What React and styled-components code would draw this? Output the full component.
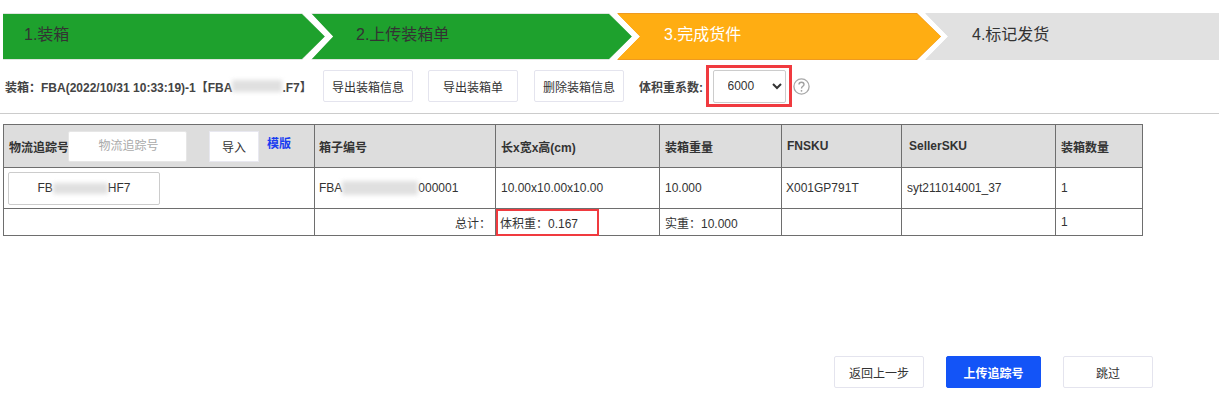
import React from "react";
import styled, { createGlobalStyle } from "styled-components";

const Global = createGlobalStyle`
  html, body { margin: 0; padding: 0; background: #fff; }
  body { font-family: "Liberation Sans", "Noto Sans CJK SC", sans-serif; font-size: 12px; color: #333; }
`;
const Page = styled.div`
  width: 1219px; height: 410px; overflow: hidden; padding-top: 13px; box-sizing: border-box;
`;
const Steps = styled.div`
  display: flex; height: 47px; padding-left: 3px;
`;
const Step = styled.div`
  position: relative; flex: none; box-sizing: border-box; height: 47px;
  width: ${p => p.$w}px; margin-left: ${p => p.$ml}px;
  padding-left: ${p => p.$pl}px;
  background: ${p => p.$edge};
  clip-path: ${p => p.$shape};
  font-size: 16px; line-height: 43px; color: ${p => p.$color};
  &::before {
    content: ""; position: absolute; inset: 1px 0 1px 0; background: ${p => p.$bg}; clip-path: ${p => p.$shape};
  }
  & > span { position: relative; }
`;
const Toolbar = styled.div`
  display: flex; align-items: center; height: 54px; box-sizing: border-box;
  border-bottom: 1px solid #ccc; padding: 0 0 1px 5px; font-size: 12px;
`;
const Info = styled.div`
  font-weight: bold; color: #444; width: 318px; flex: none; white-space: nowrap; display: flex; align-items: center;
`;
const Smear = styled.span`
  display: inline-block; width: ${p => p.$w}px; height: ${p => p.$h || 12}px; background: #e0e0e0; filter: blur(2px);
`;
const Btn = styled.button`
  flex: none; box-sizing: border-box; width: ${p => p.$w}px; height: ${p => p.$h || 32}px; margin-right: ${p => p.$mr || 0}px;
  background: ${p => p.$primary ? "#1354f7" : "#fff"};
  color: ${p => p.$primary ? "#fff" : "#333"};
  border: 1px solid ${p => p.$primary ? "#1354f7" : "#e4e4ee"};
  border-radius: 2px; padding: 0; font: ${p => p.$primary ? "bold" : "normal"} 12px "Liberation Sans", "Noto Sans CJK SC", sans-serif;
`;
const CoefLabel = styled.span`
  margin-left: 15px; width: 67px; flex: none; color: #444; font-weight: bold; white-space: nowrap;
`;
const RedBox = styled.div`
  box-sizing: border-box; width: 86px; height: 42px; flex: none; border: 3px solid #f03a3f;
  display: flex; align-items: center; justify-content: center;
`;
const Select = styled.select`
  width: 73px; height: 33px; box-sizing: border-box; border: 1px solid #ccc; border-radius: 2px; background: #fff;
  padding-left: 10px; font: 12px "Liberation Sans", sans-serif; color: #333;
`;
const Help = styled.svg`
  width: 17px; height: 17px; margin-left: 1px; flex: none;
`;
const TableWrap = styled.div`
  padding: 10px 0 0 3px;
`;
const Table = styled.table`
  border-collapse: collapse; table-layout: fixed; width: 1139px;
  th, td { border: 1px solid #6e6e6e; padding: 0 5px; font-size: 12px; text-align: left; box-sizing: border-box; }
  th { background: #ddd; height: 43px; color: #333; font-weight: bold; }
  td { background: #fff; color: #333; }
  th:nth-child(2), td:nth-child(1), td:nth-child(2), td:nth-child(5) { padding-left: 4px; }
  th:nth-child(6) { padding-left: 7px; }
`;
const BodyRow = styled.tr` height: 41px; `;
const TotalRow = styled.tr` height: 27px; `;
const HeadTools = styled.div`
  display: flex; align-items: center; white-space: nowrap;
`;
const TrackInput = styled.input`
  box-sizing: border-box; width: 119px; height: 31px; margin-left: -1px; border: 1px solid #e6e6e6; border-radius: 2px; background: #fff;
  text-align: center; font: 12px "Liberation Sans", "Noto Sans CJK SC", sans-serif; padding: 0 0 0 2px;
  &::placeholder { color: #aaa; }
`;
const ImportBtn = styled.button`
  box-sizing: border-box; width: 50px; height: 31px; margin-left: 22px; border: 1px solid #e8e8f0; background: #fff; padding: 0;
  font: 12px "Liberation Sans", "Noto Sans CJK SC", sans-serif; color: #333;
`;
const TemplateLink = styled.a`
  margin: 0 0 8px 8px; color: #1a3df0; font-weight: bold;
`;
const TrackBox = styled.div`
  box-sizing: border-box; width: 152px; height: 33px; border: 1px solid #ccc; border-radius: 2px; display: flex; align-items: center; justify-content: center; overflow: hidden;
`;
const Masked = styled.span`
  display: inline-flex; align-items: center; white-space: nowrap;
`;
const RightCell = styled.td`
  && { text-align: right; padding-right: 4px; }
`;
const AnnotCell = styled.td`
  position: relative;
  && { padding-left: 4px; }
`;
const CellMark = styled.div`
  position: absolute; left: 0; top: 0; width: 103px; height: 27px; box-sizing: border-box; border: 2.5px solid #f03a3f;
`;
const Footer = styled.div`
  display: flex; padding: 120px 0 0 834px;
`;

const shapes = {
  first: "polygon(0 0, 299px 0, 322px 50%, 299px 100%, 0 100%)",
  mid: "polygon(0 0, 298px 0, 321px 50%, 298px 100%, 0 100%, 22px 50%)",
  third: "polygon(0 0, 300px 0, 324px 50%, 300px 100%, 0 100%, 23px 50%)",
  last: "polygon(0 0, 100% 0, 100% 100%, 0 100%, 23px 50%)",
};

export default function App() {
  return (
    <Page>
      <Global />
      <Steps>
        <Step $w={322} $ml={0} $pl={21} $bg="#1ea12d" $edge="#dfe6df" $color="#333" $shape={shapes.first}><span>1.装箱</span></Step>
        <Step $w={321} $ml={-14} $pl={45} $bg="#1ea12d" $edge="#dfe6df" $color="#333" $shape={shapes.mid}><span>2.上传装箱单</span></Step>
        <Step $w={324} $ml={-15} $pl={47} $bg="#ffad12" $edge="#ee9a20" $color="#fff" $shape={shapes.third}><span>3.完成货件</span></Step>
        <Step $w={294} $ml={-16} $pl={47} $bg="#e1e1e1" $edge="#e1e1e1" $color="#333" $shape={shapes.last}><span>4.标记发货</span></Step>
      </Steps>
      <Toolbar>
        <Info>装箱：FBA(2022/10/31 10:33:19)-1【FBA<Smear $w={50} />.F7】</Info>
        <Btn $w={90} $mr={15}>导出装箱信息</Btn>
        <Btn $w={90} $mr={16}>导出装箱单</Btn>
        <Btn $w={90}>删除装箱信息</Btn>
        <CoefLabel>体积重系数:</CoefLabel>
        <RedBox>
          <Select defaultValue="6000"><option>6000</option><option>5000</option></Select>
        </RedBox>
        <Help viewBox="0 0 17 17" aria-hidden="true">
          <circle cx="8.5" cy="8.5" r="7.6" fill="none" stroke="#a8a8a8" strokeWidth="1.3" />
          <path d="M6 6.6c0-1.5 1.1-2.4 2.5-2.4s2.5.9 2.5 2.2c0 1.9-2.5 1.9-2.5 4" fill="none" stroke="#a0a0a0" strokeWidth="1.4" />
          <circle cx="8.5" cy="12.8" r=".9" fill="#a0a0a0" />
        </Help>
      </Toolbar>
      <TableWrap>
        <Table>
          <colgroup>
            <col style={{ width: 311 }} /><col style={{ width: 181 }} /><col style={{ width: 164 }} /><col style={{ width: 122 }} /><col style={{ width: 120 }} /><col style={{ width: 154 }} /><col style={{ width: 87 }} />
          </colgroup>
          <thead>
            <tr>
              <th>
                <HeadTools>
                  物流追踪号
                  <TrackInput placeholder="物流追踪号" />
                  <ImportBtn>导入</ImportBtn>
                  <TemplateLink>模版</TemplateLink>
                </HeadTools>
              </th>
              <th>箱子编号</th>
              <th>长x宽x高(cm)</th>
              <th>装箱重量</th>
              <th>FNSKU</th>
              <th>SellerSKU</th>
              <th>装箱数量</th>
            </tr>
          </thead>
          <tbody>
            <BodyRow>
              <td><TrackBox><Masked>FB<Smear $w={55} $h={11} />HF7</Masked></TrackBox></td>
              <td><Masked>FBA<Smear $w={76} $h={14} />000001</Masked></td>
              <td>10.00x10.00x10.00</td>
              <td>10.000</td>
              <td>X001GP791T</td>
              <td>syt211014001_37</td>
              <td>1</td>
            </BodyRow>
            <TotalRow>
              <td></td>
              <RightCell>总计：</RightCell>
              <AnnotCell>体积重：0.167<CellMark /></AnnotCell>
              <td>实重：10.000</td>
              <td></td>
              <td></td>
              <td>1</td>
            </TotalRow>
          </tbody>
        </Table>
      </TableWrap>
      <Footer>
        <Btn $w={90} $mr={22}>返回上一步</Btn>
        <Btn $w={95} $mr={22} $primary>上传追踪号</Btn>
        <Btn $w={90}>跳过</Btn>
      </Footer>
    </Page>
  );
}
